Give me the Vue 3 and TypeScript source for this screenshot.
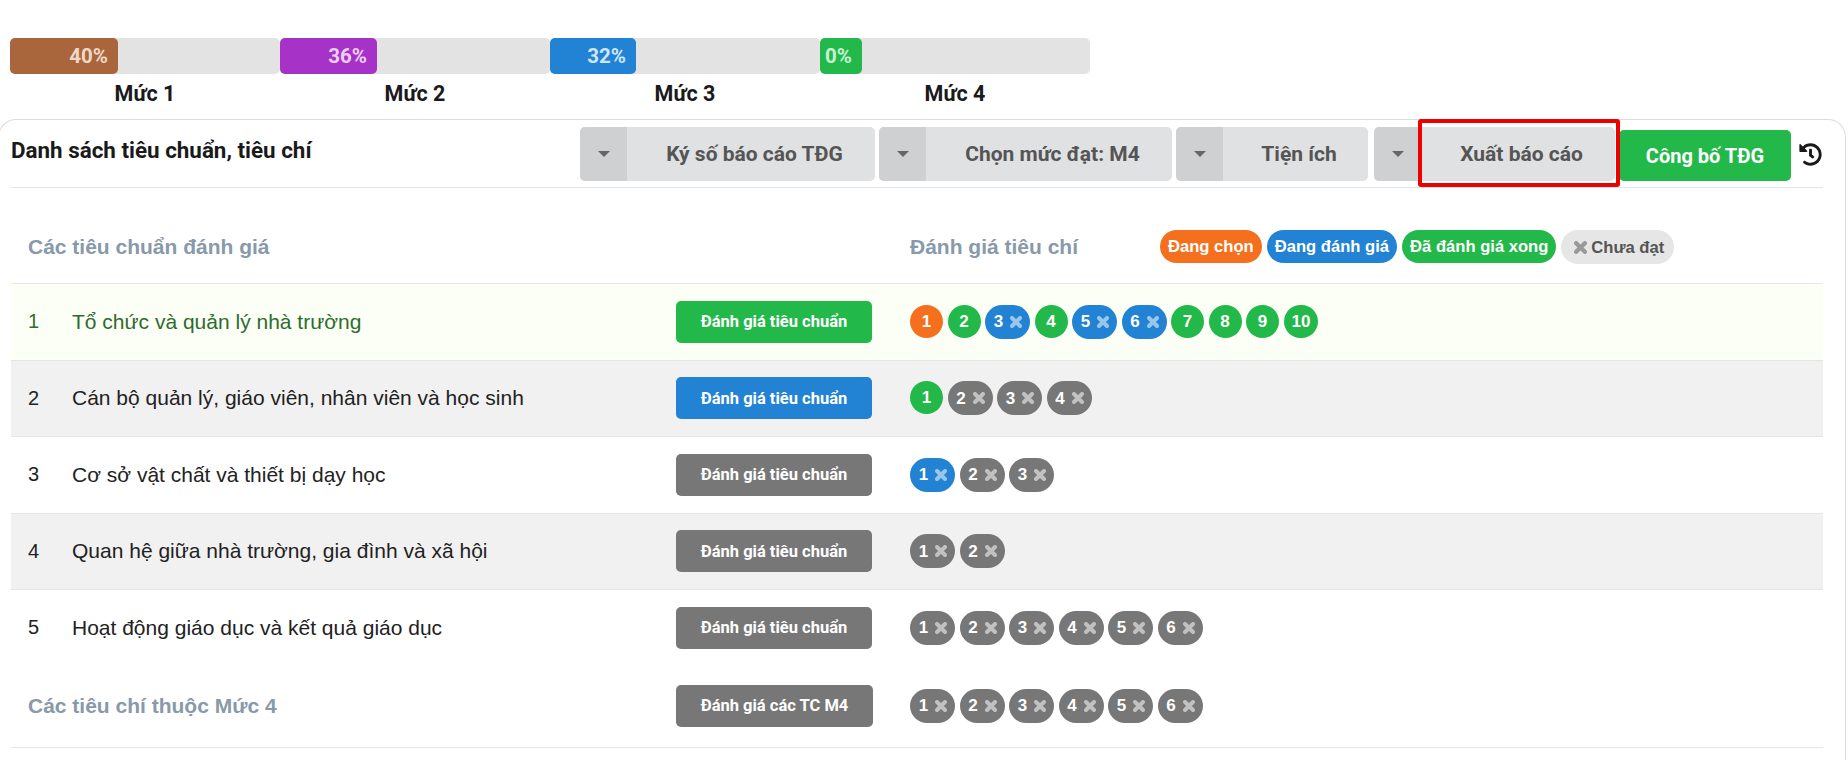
<script setup lang="ts">
type Chip = { n: number; c: 'o' | 'g' | 'b' | 'k'; x?: boolean }

const levels = [
  { label: 'Mức 1', pct: 40, w: 108, color: '#a9663d', text: '#f0d8c8' },
  { label: 'Mức 2', pct: 36, w: 97, color: '#a632c8', text: '#ecd0f4' },
  { label: 'Mức 3', pct: 32, w: 86, color: '#2282d3', text: '#cfe6f8' },
  { label: 'Mức 4', pct: 0, w: 42, color: '#22b84a', text: '#c8f2d4' },
]

const actions = [
  { label: 'Ký số báo cáo TĐG', w: 295 },
  { label: 'Chọn mức đạt: M4', w: 293 },
  { label: 'Tiện ích', w: 192 },
  { label: 'Xuất báo cáo', w: 241, marked: true },
]

const k = (n: number): Chip => ({ n, c: 'k', x: true })
const rows: { no: number; name: string; btn: string; active?: boolean; alt?: boolean; chips: Chip[] }[] = [
  {
    no: 1,
    name: 'Tổ chức và quản lý nhà trường',
    btn: 'g',
    active: true,
    chips: [
      { n: 1, c: 'o' },
      { n: 2, c: 'g' },
      { n: 3, c: 'b', x: true },
      { n: 4, c: 'g' },
      { n: 5, c: 'b', x: true },
      { n: 6, c: 'b', x: true },
      { n: 7, c: 'g' },
      { n: 8, c: 'g' },
      { n: 9, c: 'g' },
      { n: 10, c: 'g' },
    ],
  },
  {
    no: 2,
    name: 'Cán bộ quản lý, giáo viên, nhân viên và học sinh',
    btn: 'b',
    alt: true,
    chips: [{ n: 1, c: 'g' }, k(2), k(3), k(4)],
  },
  {
    no: 3,
    name: 'Cơ sở vật chất và thiết bị dạy học',
    btn: 'k',
    chips: [{ n: 1, c: 'b', x: true }, k(2), k(3)],
  },
  {
    no: 4,
    name: 'Quan hệ giữa nhà trường, gia đình và xã hội',
    btn: 'k',
    alt: true,
    chips: [k(1), k(2)],
  },
  {
    no: 5,
    name: 'Hoạt động giáo dục và kết quả giáo dục',
    btn: 'k',
    chips: [k(1), k(2), k(3), k(4), k(5), k(6)],
  },
]
const m4 = [k(1), k(2), k(3), k(4), k(5), k(6)]
</script>

<template>
  <div class="page">
    <div class="levels">
      <div v-for="l in levels" :key="l.label" class="level">
        <div class="track">
          <div class="fill" :style="{ width: l.w + 'px', background: l.color, color: l.text }">{{ l.pct }}%</div>
        </div>
        <div class="level-name">{{ l.label }}</div>
      </div>
    </div>

    <section class="card">
      <header class="card-head">
        <h2 class="title">Danh sách tiêu chuẩn, tiêu chí</h2>
        <div class="actions">
          <div
            v-for="a in actions"
            :key="a.label"
            class="split"
            :class="{ 'split-last': a.marked }"
            :style="{ width: a.w + 'px' }"
          >
            <span class="caret-box"><i class="caret"></i></span>
            <span class="split-label" :class="{ marked: a.marked }">{{ a.label }}</span>
          </div>
          <button class="publish">Công bố TĐG</button>
          <svg class="history" viewBox="0 0 512 512" width="23" height="23" aria-hidden="true">
            <path fill="#1a1a1a" d="M504 255.531c.253 136.64-111.18 248.372-247.82 248.468-59.015.042-113.223-20.53-155.822-54.911-11.077-8.94-11.905-25.541-1.839-35.607l11.267-11.267c8.609-8.609 22.353-9.551 31.891-1.984C173.062 425.135 212.781 440 256 440c101.705 0 184-82.311 184-184 0-101.705-82.311-184-184-184-48.814 0-93.149 18.969-126.068 49.932l50.754 50.754c10.08 10.08 2.941 27.314-11.313 27.314H24c-8.837 0-16-7.163-16-16V38.627c0-14.254 17.234-21.393 27.314-11.314l49.372 49.372C129.209 34.136 189.552 8 256 8c136.81 0 247.747 110.78 248 247.531zm-180.912 78.784l9.823-12.63c8.138-10.463 6.253-25.542-4.21-33.679L288 256.349V152c0-13.255-10.745-24-24-24h-16c-13.255 0-24 10.745-24 24v135.651l65.409 50.874c10.463 8.137 25.541 6.253 33.679-4.21z" />
          </svg>
        </div>
      </header>

      <div class="table-head">
        <div class="th-left">Các tiêu chuẩn đánh giá</div>
        <div class="th-mid">Đánh giá tiêu chí</div>
        <div class="legend">
          <span class="pill o">Đang chọn</span>
          <span class="pill b">Đang đánh giá</span>
          <span class="pill g">Đã đánh giá xong</span>
          <span class="pill none">
            <svg class="x" viewBox="0 0 12 12" aria-hidden="true"><path d="M2 2l8 8M10 2l-8 8" /></svg>
            Chưa đạt
          </span>
        </div>
      </div>

      <div
        v-for="r in rows"
        :key="r.no"
        class="row"
        :class="{ active: r.active, alt: r.alt, open: r.no === 5 }"
      >
        <div class="no">{{ r.no }}</div>
        <div class="name">{{ r.name }}</div>
        <div><button class="eval" :class="r.btn">Đánh giá tiêu chuẩn</button></div>
        <div class="chips">
          <span v-for="c in r.chips" :key="c.n" class="chip" :class="[c.c, { wide: c.x }]">
            {{ c.n }}
            <svg v-if="c.x" class="x" viewBox="0 0 12 12" aria-hidden="true"><path d="M2 2l8 8M10 2l-8 8" /></svg>
          </span>
        </div>
      </div>

      <div class="row last">
        <div class="m4-name">Các tiêu chí thuộc Mức 4</div>
        <div><button class="eval k m4-btn">Đánh giá các TC M4</button></div>
        <div class="chips">
          <span v-for="c in m4" :key="c.n" class="chip wide" :class="c.c">
            {{ c.n }}
            <svg class="x" viewBox="0 0 12 12" aria-hidden="true"><path d="M2 2l8 8M10 2l-8 8" /></svg>
          </span>
        </div>
      </div>
    </section>
  </div>
</template>

<style>
html, body { background: #fff; overflow: hidden; }
</style>

<style scoped>
.page {
  height: 760px;
  overflow: hidden;
  box-sizing: border-box;
  padding-top: 38px;
  font-family: "Liberation Sans", Arial, sans-serif;
  color: #1a1a1a;
}
.levels { display: flex; padding-left: 10px; }
.level { width: 270px; }
.track {
  height: 36px;
  background: #e3e3e3;
  border-radius: 5px;
}
.fill {
  height: 100%;
  border-radius: 5px;
  box-sizing: border-box;
  padding-right: 10px;
  text-align: right;
  font: 700 20.5px/36px Roboto, sans-serif;
  white-space: nowrap;
}
.level-name {
  margin-top: 8px;
  text-align: center;
  font: 700 21.5px/24px Roboto, sans-serif;
  color: #1a1a1a;
}
.card {
  margin: 13px 2px 0 -2px;
  border: 1px solid #dcdcdc;
  border-bottom: 0;
  border-radius: 18px 18px 0 0;
  padding: 0 22px 0 12px;
  height: 640px;
}
.card-head {
  display: flex;
  justify-content: space-between;
  height: 67px;
  border-bottom: 1px solid #e2e4e6;
}
.title {
  margin: 17px 0 0;
  font: 700 22.4px/26px Roboto, sans-serif;
  color: #1a1a1a;
}
.actions { display: flex; align-items: flex-start; padding-top: 7px; gap: 4px; }
.split {
  position: relative;
  display: flex;
  height: 54px;
  border-radius: 5px;
  background: #e0e1e3;
}
.split-last { margin-left: 2px; }
.caret-box {
  flex: 0 0 47px;
  background: #cfd0d2;
  border-radius: 5px 0 0 5px;
  display: flex;
  align-items: center;
  justify-content: center;
}
.caret {
  width: 0;
  height: 0;
  border-left: 6px solid transparent;
  border-right: 6px solid transparent;
  border-top: 6px solid #666;
}
.split-label {
  flex: 1;
  display: flex;
  align-items: center;
  justify-content: center;
  padding-left: 7px;
  font: 700 21px Roboto, sans-serif;
  color: #555;
}
.marked::after {
  content: "";
  position: absolute;
  left: 44px;
  top: -8px;
  width: 202px;
  height: 68px;
  box-sizing: border-box;
  border: 4px solid #ec0000;
  border-radius: 3px;
}
.publish {
  width: 172px;
  height: 51px;
  margin-top: 3px;
  border: 0;
  border-radius: 5px;
  background: #22b84a;
  color: #fff;
  font: 700 20px Roboto, sans-serif;
}
.history { margin: 16px 1px 0 4px; }
.table-head {
  display: flex;
  height: 96px;
  box-sizing: border-box;
  padding-top: 42px;
  border-bottom: 1px solid #e6e9e4;
  color: #8899aa;
  font-weight: 700;
  font-size: 21px;
  line-height: 33px;
}
.th-left { width: 899px; padding-left: 17px; box-sizing: border-box; }
.th-mid { width: 250px; }
.legend { display: flex; gap: 5px; align-items: flex-start; }
.pill {
  display: inline-flex;
  align-items: center;
  height: 33px;
  padding: 0 8px;
  border-radius: 17px;
  color: #fff;
  font: 700 16.6px/33px "Liberation Sans", Arial, sans-serif;
  white-space: nowrap;
}
.pill.none {
  height: 34px;
  padding: 0 10px 0 13px;
  gap: 4px;
  background: #e6e6e6;
  color: #555;
}
.pill.none .x { width: 13px; height: 13px; }
.pill.none .x path { stroke: #999; }
.o { background: #f5701e; }
.g { background: #22b84a; }
.b { background: #2282d3; }
.k { background: #777; }
.row {
  display: grid;
  grid-template-columns: 61px 604px 234px 1fr;
  align-items: center;
  height: 76.5px;
  box-sizing: border-box;
  border-bottom: 1px solid #e5e5e5;
  font-size: 21px;
  color: #222;
}
.row.active { background: #fbfff5; color: #2f6b2f; }
.row.alt { background: #f1f1f1; }
.row.open { border-bottom: 0; padding-bottom: 1px; }
.row.last { height: 81px; padding-bottom: 2px; grid-template-columns: 665px 234px 1fr; }
.no { padding-left: 17px; font-size: 20px; }
.m4-name {
  padding-left: 17px;
  font-size: 21px;
  font-weight: 700;
  color: #8899aa;
}
.eval {
  display: block;
  width: 196px;
  height: 42px;
  border: 0;
  border-radius: 5px;
  padding: 0;
  color: #fff;
  font: 700 16.5px Roboto, sans-serif;
  text-align: center;
}
.m4-btn { width: 197px; }
.chips { display: flex; gap: 4.5px; }
.chip {
  display: inline-flex;
  align-items: center;
  justify-content: center;
  min-width: 33px;
  height: 33px;
  border-radius: 17px;
  box-sizing: border-box;
  color: #fff;
  font: 700 17px/33px "Liberation Sans", Arial, sans-serif;
  padding: 0 8px;
}
.chip.wide {
  height: 34px;
  padding: 0 7px 0 8px;
  gap: 7px;
  width: 45px;
}
.x { width: 12px; height: 12px; flex: none; }
.x path {
  fill: none;
  stroke: rgba(255, 255, 255, 0.55);
  stroke-width: 4;
  stroke-linecap: round;
}
</style>
